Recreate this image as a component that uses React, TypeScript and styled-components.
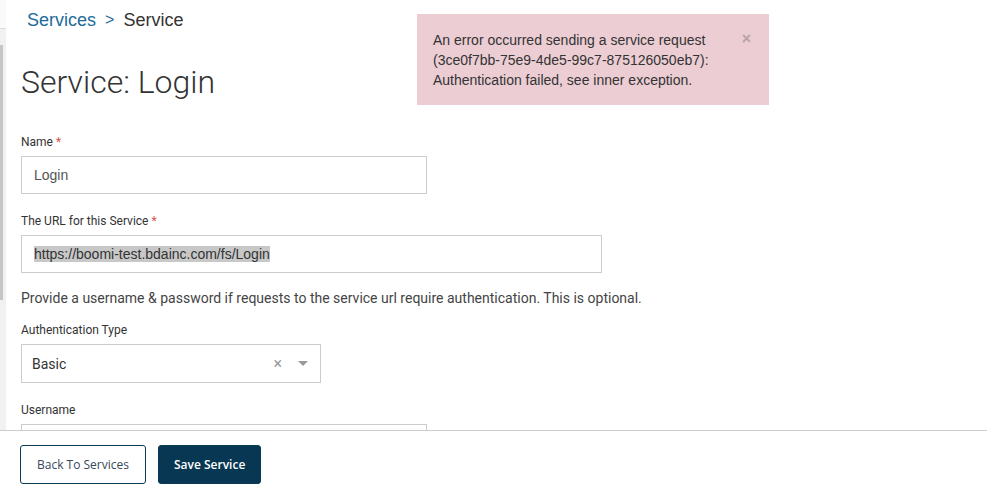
import React from "react";
import styled, { createGlobalStyle } from "styled-components";

const Global = createGlobalStyle`
  html, body { margin: 0; padding: 0; background: #fff; }
  body { font-family: "Liberation Sans", Arial, sans-serif; color: #333; }
  * { box-sizing: border-box; }
`;

const Page = styled.div`
  width: 987px;
  height: 496px;
  display: flex;
  flex-direction: column;
  overflow: hidden;
`;

const Body = styled.div`
  flex: 0 0 430px;
  display: flex;
  overflow: hidden;
`;

const Rail = styled.div`
  flex: 0 0 6px;
  display: flex;
  flex-direction: column;
  background: #f1f1f1;
`;

const RailTop = styled.div`
  height: 29px;
  background: #fafafa;
  border-bottom: 1px solid #dcdcdc;
`;

const RailTrack = styled.div`
  flex: 1;
  padding-top: 16px;
`;

const RailThumb = styled.div`
  width: 3px;
  height: 255px;
  background: #c6c6c6;
`;

const Main = styled.main`
  flex: 1;
  position: relative;
  padding: 8px 0 0 15px;
`;

const Crumbs = styled.nav`
  display: flex;
  align-items: center;
  gap: 9px;
  padding-left: 6px;
  font-size: 18px;
  line-height: 24px;
`;

const CrumbLink = styled.span`
  color: #236b98;
`;

const CrumbSep = styled.span`
  color: #236b98;
  font-size: 16px;
`;

const CrumbCurrent = styled.span`
  color: #333;
`;

const Title = styled.h1`
  margin: 30px 0 0;
  font-family: Roboto, "Liberation Sans", sans-serif;
  font-weight: 300;
  font-size: 32px;
  line-height: 40px;
  color: #333;
`;

const Form = styled.div`
  margin-top: 32px;
  display: flex;
  flex-direction: column;
`;

const Label = styled.label`
  display: block;
  font-family: Roboto, "Liberation Sans", sans-serif;
  font-size: 12px;
  line-height: 16px;
  color: #333;
  margin-bottom: 6px;
`;

const Req = styled.span`
  color: #d9534f;
`;

const Field = styled.div<{ $gap?: number }>`
  margin-bottom: ${(p) => p.$gap ?? 19}px;
`;

const Input = styled.div<{ $w: number }>`
  width: ${(p) => p.$w}px;
  height: 38px;
  border: 1px solid #ccc;
  display: flex;
  align-items: center;
  padding: 0 12px;
  font-size: 14px;
  color: #555;
`;

const Selected = styled.span`
  background: #c8c8c8;
  color: #333;
`;

const Help = styled.p`
  margin: 0 0 15px;
  font-family: Roboto, "Liberation Sans", sans-serif;
  font-size: 14px;
  line-height: 18px;
  color: #444;
`;

const Select = styled.div`
  width: 300px;
  height: 39px;
  border: 1px solid #ccc;
  display: flex;
  align-items: center;
  padding: 0 12px 0 10px;
  font-family: Roboto, "Liberation Sans", sans-serif;
  font-size: 14px;
  color: #333;
`;

const SelectValue = styled.span`
  flex: 1;
`;

const ClearX = styled.span`
  color: #999;
  font-size: 16px;
  margin-right: 16px;
`;

const Caret = styled.span`
  width: 0;
  height: 0;
  border-left: 5px solid transparent;
  border-right: 5px solid transparent;
  border-top: 5px solid #999;
`;

const Toast = styled.div`
  position: absolute;
  left: 411px;
  top: 14px;
  width: 352px;
  height: 91px;
  background: #eccdd3;
  padding: 16px 16px 0;
  display: flex;
  gap: 20px;
  font-size: 14px;
  line-height: 20px;
  color: #333;
`;

const ToastText = styled.div`
  flex: 1;
`;

const ToastClose = styled.span`
  color: #b7a3a6;
  font-size: 16px;
  font-weight: bold;
  line-height: 14px;
  margin-top: 2px;
  margin-right: 2px;
`;

const Footer = styled.footer`
  flex: 1;
  border-top: 1px solid #ccc;
  display: flex;
  align-items: flex-start;
  gap: 12px;
  padding: 14px 0 0 20px;
`;

const Button = styled.button<{ $primary?: boolean }>`
  height: 39px;
  padding: 0 ${(p) => (p.$primary ? 15 : 16)}px;
  border-radius: 3px;
  font-family: "Open Sans", sans-serif;
  font-size: 12px;
  border: 1px solid #0b3a56;
  background: ${(p) => (p.$primary ? "#073752" : "#fff")};
  color: ${(p) => (p.$primary ? "#fff" : "#37495a")};
  font-weight: ${(p) => (p.$primary ? 600 : 400)};
`;

export default function App() {
  return (
    <Page>
      <Global />
      <Body>
        <Rail>
          <RailTop />
          <RailTrack>
            <RailThumb />
          </RailTrack>
        </Rail>
        <Main>
          <Crumbs>
            <CrumbLink>Services</CrumbLink>
            <CrumbSep>&gt;</CrumbSep>
            <CrumbCurrent>Service</CrumbCurrent>
          </Crumbs>
          <Title>Service: Login</Title>
          <Form>
            <Field>
              <Label>
                Name <Req>*</Req>
              </Label>
              <Input $w={406}>Login</Input>
            </Field>
            <Field $gap={16}>
              <Label>
                The URL for this Service <Req>*</Req>
              </Label>
              <Input $w={581}>
                <Selected>https://boomi-test.bdainc.com/fs/Login</Selected>
              </Input>
            </Field>
            <Help>
              Provide a username &amp; password if requests to the service url require authentication. This is optional.
            </Help>
            <Field>
              <Label>Authentication Type</Label>
              <Select>
                <SelectValue>Basic</SelectValue>
                <ClearX>×</ClearX>
                <Caret />
              </Select>
            </Field>
            <Field>
              <Label>Username</Label>
              <Input $w={406} />
            </Field>
          </Form>
          <Toast>
            <ToastText>
              An error occurred sending a service request (3ce0f7bb-75e9-4de5-99c7-875126050eb7): Authentication failed, see inner exception.
            </ToastText>
            <ToastClose>×</ToastClose>
          </Toast>
        </Main>
      </Body>
      <Footer>
        <Button>Back To Services</Button>
        <Button $primary>Save Service</Button>
      </Footer>
    </Page>
  );
}
